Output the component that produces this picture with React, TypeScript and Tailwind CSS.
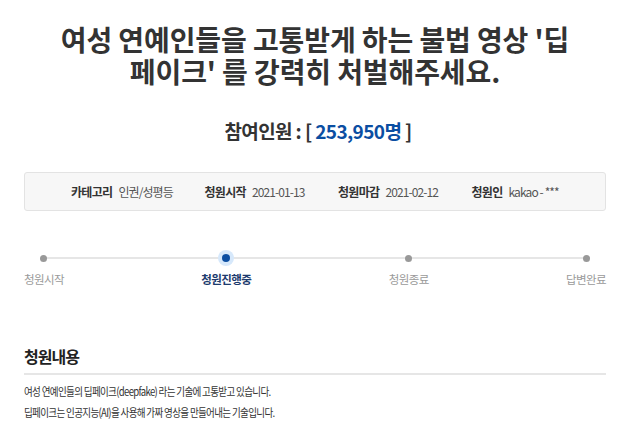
const font = { fontFamily: '"Noto Sans CJK KR", "Noto Sans", sans-serif' };

const infoItems = [
  { label: "카테고리", value: "인권/성평등" },
  { label: "청원시작", value: "2021-01-13" },
  { label: "청원마감", value: "2021-02-12" },
  { label: "청원인", value: "kakao - ***" },
];

const steps = ["청원시작", "청원진행중", "청원종료", "답변완료"];
const activeStep = 1;

export default function App() {
  return (
    <div className="w-[630px] h-[427px] bg-white overflow-hidden px-6 text-[#333]" style={font}>
      {/* Title */}
      <h1 className="pt-[23px] text-center text-[28px] font-bold tracking-[-0.1px] text-[#333]">
        <div className="leading-[32px]">여성 연예인들을 고통받게 하는 불법 영상 '딥</div>
        <div className="leading-[32px]">페이크' 를 강력히 처벌해주세요.</div>
      </h1>

      {/* Count */}
      <div className="mt-[32px] pl-[6px] text-center text-[19px] font-bold leading-6 tracking-[-0.6px]">
        참여인원 : [ <span className="text-[#0b4ea2]">253,950명</span> ]
      </div>

      {/* Info box */}
      <div className="mt-[29px] h-[39px] rounded-[3px] border border-[#e3e3e3] bg-[#f7f7f7] flex items-center pl-[46px] text-[12px] tracking-[-0.7px]">
        {infoItems.map((item) => (
          <div key={item.label} className="flex items-center w-[136px]">
            <span className="font-bold text-[#333]">{item.label}</span>
            <span className="ml-[6px] text-[#555] tracking-[-0.9px]">{item.value}</span>
          </div>
        ))}
      </div>

      {/* Progress */}
      <div className="relative mt-[40px]">
        <div className="absolute left-[18px] right-[16px] top-[6px] h-[2px] bg-[#e6e6e6]" />
        <div className="relative flex justify-between">
          {steps.map((step, i) => (
            <div key={step} className="flex flex-col items-center">
              <div className="h-[14px] flex items-center justify-center">
                {i === activeStep ? (
                  <span className="flex items-center justify-center w-[16px] h-[16px] rounded-full bg-[#d6e8fb]">
                    <span className="w-[8px] h-[8px] rounded-full bg-[#0b4ea2]" />
                  </span>
                ) : (
                  <span className="w-[7px] h-[7px] rounded-full bg-[#999]" />
                )}
              </div>
              <span
                className={
                  "mt-[5px] text-[11.5px] leading-[18px] tracking-[-0.6px] " +
                  (i === activeStep ? "font-bold text-[#1d3b6e]" : "text-[#9a9a9a]")
                }
              >
                {step}
              </span>
            </div>
          ))}
        </div>
      </div>

      {/* Content */}
      <h2 className="mt-[56px] text-[16px] font-bold leading-6 tracking-[-1px] text-[#222]">청원내용</h2>
      <div className="mt-[5px] h-[2px] bg-[#e6e6e6]" />
      <div className="mt-[6px] origin-left scale-x-[0.83] w-[700px] text-[11.5px] leading-[21px] tracking-[-0.8px] text-[#333]">
        <p>여성 연예인들의 딥페이크(deepfake) 라는 기술에 고통받고 있습니다.</p>
        <p>딥페이크는 인공지능(AI)을 사용해 가짜 영상을 만들어내는 기술입니다.</p>
      </div>
    </div>
  );
}
